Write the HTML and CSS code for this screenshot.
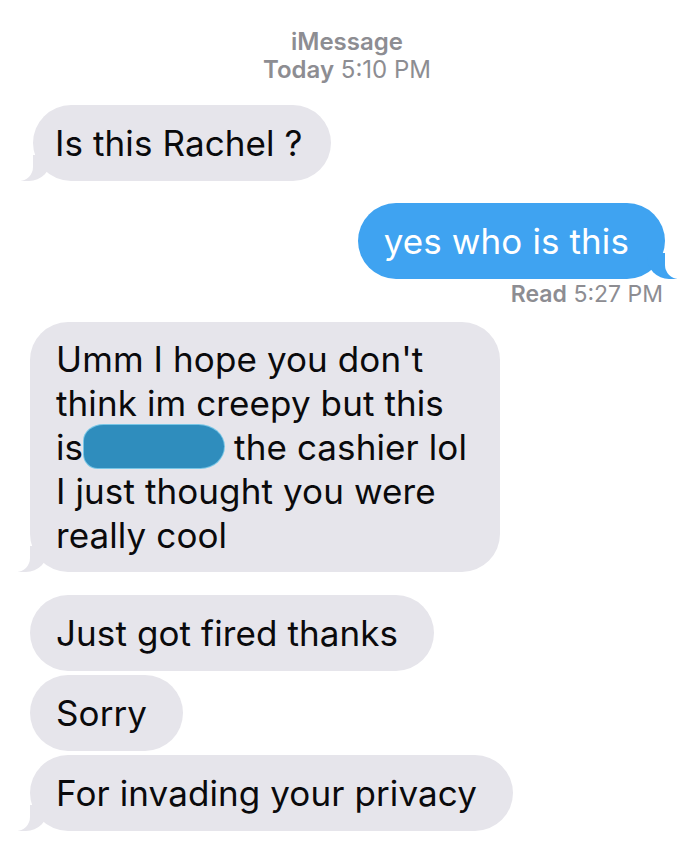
FILE: index.html
```html
<!DOCTYPE html>
<html lang="en">
<head>
<meta charset="utf-8">
<title>iMessage</title>
<link rel="stylesheet" href="styles.css">
</head>
<body>
<main class="thread">
  <header class="thread-header">
    <div class="service">iMessage</div>
    <div class="stamp"><b>Today</b> 5:10 PM</div>
  </header>

  <div class="bubble in tail first"><span class="txt">Is this Rachel ?</span></div>

  <div class="bubble out tail"><span class="txt">yes who is this</span></div>
  <div class="receipt"><b>Read</b> 5:27 PM</div>

  <div class="bubble in tail long"><span class="txt">Umm I hope you don't<br>think im creepy but this<br>is<span class="redact"></span> the cashier lol<br>I just thought you were<br>really cool</span></div>

  <div class="bubble in group-start"><span class="txt">Just got fired thanks</span></div>
  <div class="bubble in grouped"><span class="txt">Sorry</span></div>
  <div class="bubble in tail grouped"><span class="txt">For invading your privacy</span></div>
</main>
</body>
</html>
```
FILE: styles.css
```css
html, body {
  margin: 0;
  padding: 0;
  background: #ffffff;
}

body {
  font-family: "Inter", "Liberation Sans", sans-serif;
  -webkit-font-smoothing: antialiased;
}

.thread {
  display: flex;
  flex-direction: column;
  align-items: flex-start;
  padding: 28px 0 30px;
}

.thread-header {
  align-self: center;
  text-align: center;
  color: #8d8d92;
  font-size: 24px;
  line-height: 28px;
  margin-left: -6px;
}

.service {
  font-weight: 600;
}

.stamp b {
  font-weight: 600;
}

.bubble {
  position: relative;
  font-size: 35px;
  line-height: 44px;
  padding: 16px 36px 16px 26px;
  border-radius: 38px;
  letter-spacing: 0.1px;
}

.bubble .txt {
  position: relative;
  z-index: 2;
}

.in {
  background: #e6e5eb;
  color: #0a0a0c;
  margin-left: 30px;
}

.out {
  background: #3fa3f1;
  color: #ffffff;
  align-self: flex-end;
  margin-right: 35px;
  margin-top: 22px;
}

.first {
  margin-top: 21px;
  margin-left: 33px;
  padding-right: 28px;
  padding-left: 22px;
}

.long {
  margin-top: 14px;
  padding-top: 15px;
  padding-bottom: 15px;
  width: 408px;
  white-space: nowrap;
}

.group-start {
  margin-top: 23px;
}

.grouped {
  margin-top: 4px;
}

/* tails */
.tail::before,
.tail::after {
  content: "";
  position: absolute;
  bottom: 0;
  height: 26px;
}

.in.tail::before {
  left: -12px;
  width: 30px;
  background: #e6e5eb;
  border-bottom-right-radius: 22px;
  z-index: 0;
}

.in.tail::after {
  left: -18px;
  width: 18px;
  background: #ffffff;
  border-bottom-right-radius: 14px;
  z-index: 1;
}

.out.tail::before {
  right: -12px;
  width: 30px;
  background: #3fa3f1;
  border-bottom-left-radius: 22px;
  z-index: 0;
}

.out.tail::after {
  right: -18px;
  width: 18px;
  background: #ffffff;
  border-bottom-left-radius: 14px;
  z-index: 1;
}

.receipt {
  align-self: flex-end;
  margin-right: 37px;
  color: #8d8d92;
  font-size: 23px;
  line-height: 28px;
  margin-top: 1px;
}

.receipt b {
  font-weight: 600;
}

.redact {
  display: inline-block;
  vertical-align: top;
  width: 140px;
  height: 43px;
  margin-left: 1px;
  background: #2f8dbd;
  border-radius: 20px 26px 24px 14px / 16px 22px 22px 14px;
  box-shadow: 0 0 0 1px #78c6e6;
}
```
